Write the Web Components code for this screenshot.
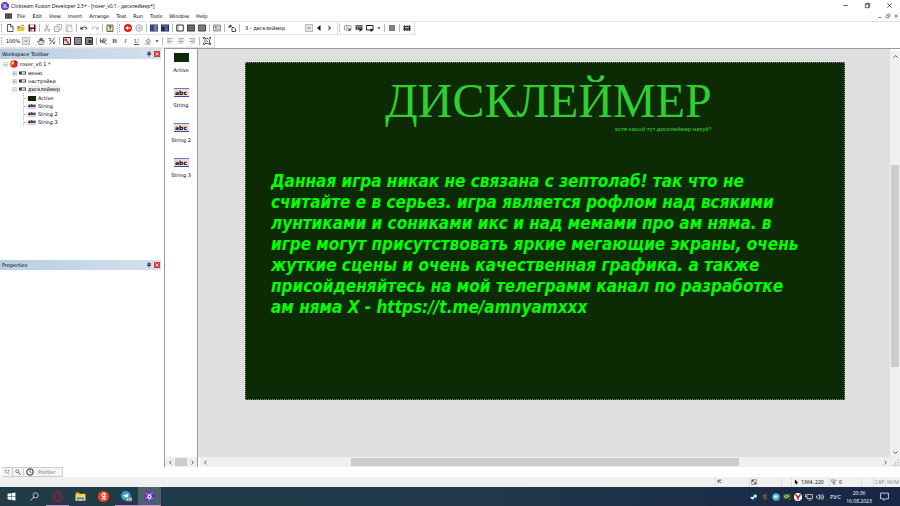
<!DOCTYPE html>
<html lang="ru">
<head>
<meta charset="utf-8">
<title>Clickteam Fusion Developer 2.5+</title>
<style>
  body {
    margin: 0;
    height: 100vh;
    font: 5px/8px "Open Sans", "Noto Sans", sans-serif;
    color: #000;
    background: #fff;
    --wide: "DejaVu Sans", "Noto Sans", sans-serif;
  }
</style>
</head>
<body>
<fusion-app></fusion-app>

<script>
// every icon is drawn on a 16x16 grid
const page = '<path d="M3 1h7l4 4v10H3z" fill="#fff" stroke="#333" stroke-width="1.6"/><path d="M9 1v5h5" fill="none" stroke="#333" stroke-width="1.4"/>';
const icons = {
  fusion: '<circle cx="8" cy="8" r="8" fill="#5b35a8"/><path d="M2 4q6 0 6 4 0-5 5-5M2 10q5 1 6-2 1 5 6 3M8 8q-2 4 0 7" fill="none" stroke="#b79af0" stroke-width="1.6"/><circle cx="8" cy="8" r="3" fill="#fff"/><circle cx="8" cy="8" r="1.3" fill="#37205f"/>',
  film: '<path d="M0 1h16v14H0z" fill="#333"/><path d="M5 2v12M11 2v12M0 8h16" stroke="#999" stroke-width="1"/><path d="M2 3v10M14 3v10" stroke="#777" stroke-width="1.4" stroke-dasharray="2 2"/>',
  new: page,
  open: '<path d="M1 4h5l1 2h6v8H1z" fill="#c58a12"/><path d="M1 14l3-7h12l-3 7z" fill="#f8c63d"/><path d="M9 3q3-3 5 1" fill="none" stroke="#c33" stroke-width="1.6"/>',
  save: '<path d="M1 1h14v14H1z" fill="#4a0d18"/><path d="M4 1h8v6H4z" fill="#f4e8e8"/><path d="M4 10h8v5H4z" fill="#ddd"/><path d="M5 11h2v3H5z" fill="#4a0d18"/>',
  cut: '<path d="M5 1l5 9M11 1l-5 9" stroke="#888" stroke-width="1.4"/><circle cx="4.5" cy="12.5" r="2" fill="none" stroke="#888" stroke-width="1.4"/><circle cx="11.5" cy="12.5" r="2" fill="none" stroke="#888" stroke-width="1.4"/>',
  copy: '<path d="M6 1h9v10H6z" fill="#fff" stroke="#aaa" stroke-width="1.6"/><path d="M1 5h9v10H1z" fill="#fff" stroke="#999" stroke-width="1.6"/><path d="M3 9h5M3 12h5" stroke="#bbb"/>',
  paste: '<path d="M2 2h11v13H2z" fill="#eee" stroke="#aaa" stroke-width="1.6"/><path d="M5 6h9v9H5z" fill="#fff" stroke="#bbb" stroke-width="1.4"/>',
  undo: '<path d="M4 8q6-5 10 0q0 2-3 3" fill="none" stroke="#222" stroke-width="1.8"/><path d="M1 5v6h6z" fill="#222"/>',
  redo: '<path d="M12 8q-6-5-10 0q0 2 3 3" fill="none" stroke="#aaa" stroke-width="1.6"/><path d="M15 5v6H9z" fill="#aaa"/>',
  help: '<path d="M2 2h12v13H2z" fill="#f5ec8c" stroke="#446" stroke-width="1.6"/><path d="M6 6q0-2 2-2t2 2q0 1.5-2 3v1M8 11.5v2" fill="none" stroke="#226" stroke-width="2"/>',
  back: '<circle cx="8" cy="8" r="8" fill="#e02020"/><path d="M3 8l5-4v3h5v2H8v3z" fill="#fff"/>',
  forward: '<circle cx="8" cy="8" r="6.5" fill="#eee" stroke="#999" stroke-width="1.6"/><path d="M12 8L8 4.5V7H4v2h4v2.5z" fill="#bbb"/>',
  story: '<path d="M0 1h16v14H0z" fill="#22285c"/><path d="M7 4h8M7 8h8M7 12h8" stroke="#b8c4f0" stroke-width="2"/><path d="M2 4h3M2 8h3M2 12h3" stroke="#6a86dd" stroke-width="2"/>',
  events: '<path d="M0 1h16v14H0z" fill="#22285c"/><path d="M2 4h12M7 8h7M7 12h7" stroke="#8fa4ea" stroke-width="1.6"/>',
  frame: '<path d="M1.5 2h13v12h-13z" fill="#fff" stroke="#333" stroke-width="2"/><path d="M4 2v12" stroke="#333"/>',
  list: '<path d="M0 1h16v14H0z" fill="#444"/><path d="M2 5h12M2 8h12M2 11h12" stroke="#999" stroke-width="1.4"/>',
  grid: '<path d="M1 2h14v12H1z" fill="#888" stroke="#444" stroke-width="2"/><path d="M6 2v12M11 2v12M1 6h14M1 10h14" stroke="#666"/>',
  props: '<path d="M1 2h14v12H1z" fill="#ddd" stroke="#777" stroke-width="1.6"/><path d="M4 5h3v3H4zM9 6h4M4 11h9" fill="#777" stroke="#777"/>',
  swap: '<path d="M2 8V4h4M4 2l3 2-3 2" fill="none" stroke="#111" stroke-width="1.8"/><path d="M8 7h4l3 3v5H8z" fill="#fff" stroke="#222" stroke-width="1.6"/>',
  prev: '<path d="M11 2v12L4 8z" fill="#111"/>',
  next: '<path d="M5 2v12l6-6z" fill="#777"/>',
  run: '<path d="M1 3h13v9H1z" fill="#eee" stroke="#888" stroke-width="1.4"/><path d="M4 6h5M4 9h3" stroke="#777"/><path d="M9 8l6 3.5-6 3.5z" fill="#555"/>',
  runframe: '<path d="M1 2h14v10H1z" fill="#555"/><path d="M1 5h14M5 2v10M10 2v10" stroke="#aaa"/><path d="M9 8l6 3.5-6 4z" fill="#222"/>',
  build: '<path d="M1 3h13v9H1z" fill="#fff" stroke="#222" stroke-width="2"/><path d="M9 9l6 3-6 4z" fill="#111"/>',
  stop: '<path d="M2 2h12v12H2z" fill="#777"/><path d="M2 6h12M2 10h12" stroke="#999"/>',
  debug: '<path d="M1 4h14v9H1z" fill="#333"/><path d="M3 2v12M8 2v12M13 2v12" stroke="#333" stroke-width="1.5"/><path d="M4 7h8M5 10h2M9 10h2" stroke="#ddd" stroke-width="1.5"/>',
  hand: '<path d="M4 15L1 9l2-1 2 2V4h2v4-6h2v6-5h2v6l1-3h2v6l-2 3z" fill="#ddd" stroke="#444" stroke-width="1.1"/>',
  zoom: '<path d="M3 15L14 1" stroke="#222" stroke-width="1.4"/><path d="M1 3h5l-3 4h4M9 9l5 5M14 8l-4 6" fill="none" stroke="#333" stroke-width="1.3"/>',
  gridred: '<path d="M1 1h14v14H1z" fill="#ddd" stroke="#333" stroke-width="2"/><path d="M3 3l6 1-2 2 6 6-2 2-6-7-2 2z" fill="#d22"/>',
  snap: '<path d="M1 1h14v14H1z" fill="#999" stroke="#333" stroke-width="2"/><path d="M4 1v14M8 1v14M12 1v14M1 5h14M1 9h14M1 12h14" stroke="#777"/>',
  center: '<path d="M1 1h14v14H1z" fill="#888" stroke="#333" stroke-width="2"/><path d="M7 6h6v6H7z" fill="#333"/>',
  fontsel: '<path d="M1 3v9l3-6 2 6V3M8 2v11M12 6l-3 4 4 5M12 3v4" fill="none" stroke="#555" stroke-width="1.6"/>',
  fill: '<path d="M4 8l5-5 4 6-5 3zM2 14h11" fill="#ddd" stroke="#777" stroke-width="1.6"/>',
  down: '<path d="M4 6h8l-4 5z" fill="#333"/>',
  alignl: '<path d="M2 3h12M2 6h8M2 9h12M2 12h8" stroke="#999" stroke-width="1.5"/>',
  alignc: '<path d="M2 3h12M4 6h8M2 9h12M4 12h8" stroke="#999" stroke-width="1.5"/>',
  alignr: '<path d="M2 3h12M6 6h8M2 9h12M6 12h8" stroke="#999" stroke-width="1.5"/>',
  fit: '<path d="M4 3h6l3 3v7H4z" fill="#fff" stroke="#222" stroke-width="1.4"/><path d="M1 4V1h3M12 1h3v3M15 12v3h-3M4 15H1v-3M7 7l3 3" fill="none" stroke="#222" stroke-width="1.6"/>',
  pin: '<path d="M5 3h6v6H5zM3 9h10M8 9v6" fill="none" stroke="#222" stroke-width="2"/><path d="M9 3h2v6H9z" fill="#222"/>',
  closered: '<path d="M0 0h16v16H0z" fill="#cf3b3b"/><path d="M4 4l8 8M12 4l-8 8" stroke="#fff" stroke-width="2"/>',
  plus: '<path d="M2 2h12v12H2z" fill="#fff" stroke="#999" stroke-width="1.5"/><path d="M8 4.5v7M4.5 8h7" stroke="#446" stroke-width="1.5"/>',
  minus: '<path d="M2 2h12v12H2z" fill="#fff" stroke="#999" stroke-width="1.5"/><path d="M4.5 8h7" stroke="#446" stroke-width="1.5"/>',
  app: '<circle cx="8" cy="8" r="7.5" fill="#e0301c"/><path d="M9 1l2 5 5 0a8 8 0 0 0-7-5z" fill="#8a1810"/><path d="M2 5l6-3-1 7-4 1z" fill="#ffb52e"/><circle cx="6" cy="5" r="2" fill="#ffe9a0"/>',
  level: '<path d="M0 4h16v8H0z" fill="#333"/><path d="M6 6h8v4H6z" fill="#fff"/>',
  green: '<path d="M0 0h16v16H0z" fill="#0c2a03"/>',
  minimize: '<path d="M3 8h10" stroke="#111" stroke-width="1.5"/>',
  restore: '<path d="M3 5h8v8H3z" fill="none" stroke="#111" stroke-width="1.5"/><path d="M5 5V3h8v8h-2" fill="none" stroke="#111" stroke-width="1.5"/>',
  close: '<path d="M3 3l10 10M13 3L3 13" stroke="#111" stroke-width="1.5"/>',
  mdimin: '<path d="M4 12h8" stroke="#567a9e" stroke-width="2.5"/>',
  mdirestore: '<path d="M3 7h7v6H3zM6 6V3h7v7h-2" fill="none" stroke="#567a9e" stroke-width="2"/>',
  mdiclose: '<path d="M4 4l8 8M12 4l-8 8" stroke="#567a9e" stroke-width="2.6"/>',
  left: '<path d="M11 2L5 8l6 6" fill="none" stroke="#333" stroke-width="2.5"/>',
  right: '<path d="M5 2l6 6-6 6" fill="none" stroke="#333" stroke-width="2.5"/>',
  up: '<path d="M2 11l6-6 6 6" fill="none" stroke="#333" stroke-width="2.5"/>',
  dn: '<path d="M2 5l6 6 6-6" fill="none" stroke="#333" stroke-width="2.5"/>',
  grip: '<path d="M13 4v2M13 8v2M13 12v2M9 8v2M9 12v2M5 12v2" stroke="#aaa" stroke-width="2"/>',
  tools: '<path d="M1 3h6M4 3v8M8 13l6-9M9 4h5M9 9l4 4" fill="none" stroke="#777" stroke-width="1.5"/>',
  lens: '<circle cx="6" cy="6" r="4" fill="none" stroke="#444" stroke-width="1.6"/><path d="M9 9l6 6" stroke="#444" stroke-width="2.5"/>',
  clock: '<circle cx="8" cy="8" r="6.5" fill="#fff" stroke="#222" stroke-width="2"/><path d="M8 4v4l3 2" fill="none" stroke="#222" stroke-width="1.5"/>',
  corner: '<path d="M3 11V3h9M4 4l7 7" fill="none" stroke="#222" stroke-width="1.8"/>',
  size: '<path d="M2 2h12v12H2z" fill="#fff" stroke="#333" stroke-width="1.5"/><path d="M4 4l8 8M4 8V4h4M8 12h4V8" fill="none" stroke="#222" stroke-width="1.5"/>',
  pointer: '<path d="M5 1v12l3-3 2 5 2-1-2-4h4z" fill="#000"/>',
  count: '<path d="M1 2h6v5H1zM9 3h6M5 11l8-8M6 9h5v5H6z" fill="none" stroke="#555" stroke-width="1.3"/>',
  windows: '<path d="M1 3l6-1v5.5H1zM8 2l7-1v6.5H8zM1 8.5h6V14l-6-1zM8 8.5h7V15l-7-1z" fill="#fff"/>',
  search: '<circle cx="10" cy="6" r="4.5" fill="none" stroke="#e8eef0" stroke-width="1.3"/><path d="M7 9l-6 6" stroke="#e8eef0" stroke-width="1.5"/>',
  opera: '<ellipse cx="8" cy="8" rx="7.2" ry="7.2" fill="none" stroke="#b3164b" stroke-width="1.3"/><ellipse cx="8" cy="8" rx="3.3" ry="6" fill="none" stroke="#b3164b" stroke-width="1.3"/>',
  folder: '<path d="M1 2h5l1 2h8v10H1z" fill="#e9a820"/><path d="M1 5h14v9H1z" fill="#ffd65c"/><path d="M3 9h10v5h-2v-2H5v2H3z" fill="#3b92d8"/>',
  yandex: '<circle cx="8" cy="8" r="8" fill="#fc3f1d"/><path d="M10 13V3.5H8.5q-2.5 0-2.5 2.5 0 2 2 2.5h2M8.5 8.5L6 13" fill="none" stroke="#fff" stroke-width="1.7"/>',
  telegram: '<circle cx="7" cy="7" r="7" fill="#2ba1da"/><path d="M2.5 7l8.5-3.5-1.5 7.5-3-2-1 1.5V8z" fill="#fff"/><path d="M7 9h9v6H7z" fill="#8a9499"/><path d="M9 12h1M11.5 12h1M14 12h1" stroke="#fff" stroke-width="2"/>',
  steam: '<circle cx="8" cy="8" r="7.5" fill="#14406e"/><circle cx="10.5" cy="6" r="3" fill="#fff"/><path d="M0 9l9-2-2 5-2 1z" fill="#fff"/>',
  epic: '<path d="M2 1h12v12l-6 3-6-3z" fill="#2c2c2c"/><path d="M5 4h2M5 4v5M5 6.5h2M9 4h3M9 4v5h3M5 12h6" fill="none" stroke="#aaa" stroke-width="1"/>',
  messenger: '<circle cx="8" cy="8" r="7.5" fill="#4db6e8"/><path d="M4 5h7v5H4z" fill="#d8f0fb"/><circle cx="12" cy="12" r="3" fill="#7a8a94"/>',
  nvidia: '<path d="M1 2h14v10H1z" fill="#4a7a12"/><path d="M3 7q4-5 9 0-5 5-9 0z" fill="none" stroke="#e6f0d6" stroke-width="1.3"/><path d="M9 9h7v7H9z" fill="#2a2a2a"/><path d="M11 12l2 2 3-4" stroke="#e90" fill="none"/>',
  ybrowser: '<circle cx="8" cy="8" r="8" fill="#fff"/><path d="M3 3l5 6 5-6M8 8v6" fill="none" stroke="#e01818" stroke-width="3"/>',
  network: '<path d="M4 3h11v8H4zM7 14h6M1 2v6h3" fill="none" stroke="#fff" stroke-width="1.3"/>',
  sound: '<path d="M1 6h2l4-3v10l-4-3H1zM9 5q2 3 0 6M11 3.5q3 4.5 0 9M13 2q5 6 0 12" fill="none" stroke="#fff" stroke-width="1.2"/>',
  notice: '<path d="M1 2h14v10H10l-3 3v-3H1z" fill="none" stroke="#fff" stroke-width="1.3"/>'
};

function define(name, html) {
  const template = document.createElement("template");
  template.innerHTML = html;
  customElements.define(name, class extends HTMLElement {
    constructor() {
      super();
      this.attachShadow({ mode: "open" });
      this.shadowRoot.appendChild(template.content.cloneNode(true));
    }
  });
}

class SvgIcon extends HTMLElement {
  constructor() {
    super();
    this.attachShadow({ mode: "open" });
  }
  connectedCallback() {
    this.shadowRoot.innerHTML = `<style>
      :host{display:block;flex:none;width:8px;height:8px}
      svg{display:block;width:100%;height:100%}
    </style><svg viewBox="0 0 16 16" preserveAspectRatio="none" aria-hidden="true">${icons[this.getAttribute("name")]}</svg>`;
  }
}
customElements.define("svg-icon", SvgIcon);

class IconButton extends HTMLElement {
  constructor() {
    super();
    this.attachShadow({ mode: "open" });
  }
  connectedCallback() {
    const name = this.getAttribute("icon");
    this.shadowRoot.innerHTML = `<style>
      :host{display:block;flex:none;width:11px}
      button{display:flex;align-items:center;justify-content:center;width:100%;height:100%;
        padding:0;border:0;background:none;font:inherit;color:inherit}
      svg-icon{width:var(--icon,8px);height:var(--icon,8px)}
    </style><button aria-label="${this.getAttribute("label") || name}">${name ? `<svg-icon name="${name}"></svg-icon>` : "<slot></slot>"}</button>`;
  }
}
customElements.define("icon-button", IconButton);

// the small "abc" picture of a String object
define("abc-icon", `<style>
  :host{display:flex;align-items:center;justify-content:center;box-sizing:border-box;flex:none;
    background:#f1d9d0;border:solid #3b3fd0;border-width:1px 0;color:#000;font-weight:bold;line-height:1}
</style>abc`);

define("tool-group", `<style>
  :host{display:flex;align-items:stretch;height:13px;box-sizing:border-box;
    padding-left:4px;padding-right:2px;background:#fdfdfd;
    border-right:1px solid #ddd;border-bottom:1px solid #e4e4e4;position:relative}
  :host::before{content:"";position:absolute;left:1px;top:2px;bottom:2px;border-left:1px dotted #aaa}
  ::slotted(hr){width:1px;margin:2px 1px 2px 2px;border:0;background:#bbb}
</style><slot></slot>`);

class DropDown extends HTMLElement {
  constructor() {
    super();
    this.attachShadow({ mode: "open" });
  }
  connectedCallback() {
    this.shadowRoot.innerHTML = `<style>
      :host{display:flex;align-items:center;background:#fff}
      label{display:flex;flex:1;align-items:center;min-width:0}
      select{appearance:none;flex:1;min-width:0;border:0;padding:0 0 0 2px;margin:0;background:none;font:inherit;color:inherit}
      svg-icon{width:4px;height:4px;padding:1px;background:#e4e4e4;border:1px solid #bbb}
    </style><label><select aria-label="${this.getAttribute("label")}"><option>${this.getAttribute("value")}</option></select><svg-icon name="dn"></svg-icon></label>`;
  }
}
customElements.define("drop-down", DropDown);

define("title-bar", `<style>
  :host{display:flex;align-items:center;height:11px;padding-left:1px;background:#fff}
  span{flex:1;padding-left:2px}
  svg-icon{width:8px;height:8px}
  icon-button{width:22px;--icon:7px}
</style>
<svg-icon name="fusion"></svg-icon><span><slot></slot></span>
<icon-button icon="minimize"></icon-button><icon-button icon="restore"></icon-button><icon-button icon="close"></icon-button>`);

define("menu-bar", `<style>
  :host{display:flex;align-items:center;height:11px;padding-left:5px;background:#fff;border-bottom:1px solid #e2e2e2;box-sizing:border-box}
  svg-icon{width:7px;height:6px;margin-right:2px}
  nav{display:flex;flex:1}
  button{border:0;background:none;padding:0 4px 0 3px;font:inherit;font-family:var(--wide);color:inherit}
  icon-button{width:8px;height:8px;--icon:6px}
</style>
<svg-icon name="film"></svg-icon>
<nav><button>File</button><button>Edit</button><button>View</button><button>Insert</button><button>Arrange</button><button>Text</button><button>Run</button><button>Tools</button><button>Window</button><button>Help</button></nav>
<icon-button icon="mdimin"></icon-button><icon-button icon="mdirestore"></icon-button><icon-button icon="mdiclose"></icon-button>`);

define("tool-bars", `<style>
  :host{display:block;background:#fff;font-family:var(--wide)}
  div{display:flex}
  .frame{width:70px;margin-left:2px}
  .zoom{width:26px;margin-right:5px}
  .narrow{width:7px;--icon:6px}
  b,i,u{font-family:"Liberation Serif",serif;font-size:7px;color:#555}
</style>
<div>
  <tool-group>
    <icon-button icon="new"></icon-button><icon-button icon="open"></icon-button><icon-button icon="save"></icon-button><hr>
    <icon-button icon="cut"></icon-button><icon-button icon="copy"></icon-button><icon-button icon="paste"></icon-button><hr>
    <icon-button icon="undo"></icon-button><icon-button icon="redo"></icon-button><hr>
    <icon-button icon="help"></icon-button>
  </tool-group>
  <tool-group>
    <icon-button icon="back"></icon-button><icon-button icon="forward"></icon-button><hr>
    <icon-button icon="story"></icon-button><icon-button icon="events"></icon-button><hr>
    <icon-button icon="frame"></icon-button><icon-button icon="list"></icon-button><icon-button icon="grid"></icon-button><hr>
    <icon-button icon="props"></icon-button><hr>
    <icon-button icon="swap"></icon-button><hr>
    <drop-down class="frame" label="Frame" value="3 - дисклеймер"></drop-down>
    <icon-button icon="prev"></icon-button><icon-button icon="next"></icon-button>
  </tool-group>
  <tool-group>
    <icon-button icon="run"></icon-button><icon-button icon="runframe"></icon-button><icon-button icon="build"></icon-button><icon-button class="narrow" icon="down"></icon-button><hr>
    <icon-button icon="stop"></icon-button><hr>
    <icon-button icon="debug"></icon-button>
  </tool-group>
</div>
<div>
  <tool-group>
    <drop-down class="zoom" label="Zoom" value="100%"></drop-down>
    <icon-button icon="hand"></icon-button><icon-button icon="zoom"></icon-button><hr>
    <icon-button icon="gridred"></icon-button><icon-button icon="snap"></icon-button><icon-button icon="center"></icon-button><hr>
    <icon-button icon="fontsel"></icon-button><icon-button label="Bold"><b>B</b></icon-button><icon-button label="Italic"><i>I</i></icon-button><icon-button label="Underline"><u>U</u></icon-button><icon-button icon="fill"></icon-button><icon-button class="narrow" icon="down"></icon-button><hr>
    <icon-button icon="alignl"></icon-button><icon-button icon="alignc"></icon-button><icon-button icon="alignr"></icon-button><hr>
    <icon-button icon="fit"></icon-button>
  </tool-group>
</div>`);

define("dock-panel", `<style>
  :host{display:flex;flex-direction:column;min-height:0;font-family:var(--wide)}
  header{display:flex;align-items:center;height:10px;padding-left:2px;background:linear-gradient(90deg,#b9cde2,#d3e1ef)}
  span{flex:1}
  icon-button{width:8px;--icon:6px}
</style>
<header><span><slot name="title"></slot></span><icon-button icon="pin"></icon-button><icon-button icon="closered"></icon-button></header>
<slot></slot>`);

define("workspace-tree", `<style>
  :host{display:block;padding:1px 3px}
  ul{list-style:none;margin:0;padding:1px 0 0 9px}
  .root{padding:0}
  div{display:flex;align-items:center;height:8px;gap:2px}
  .exp{width:5px;height:5px}
  .lvl{width:7px;height:6px}
  .leaves{margin-left:11px;padding-left:0;border-left:1px dotted #bbb}
  .leaves svg-icon{width:8px;height:5px}
  .leaves div::before{content:"";width:4px;border-top:1px dotted #bbb;margin-right:-2px}
  abc-icon{width:8px;height:5px;font-size:4px;border-width:0;background:#dcc8e4}
  mark{background:#efefef;color:inherit}
</style>
<ul class="root">
  <li><div><svg-icon class="exp" name="minus"></svg-icon><svg-icon name="app"></svg-icon>rover_v0.1 *</div>
    <ul>
      <li><div><svg-icon class="exp" name="plus"></svg-icon><svg-icon class="lvl" name="level"></svg-icon>меню</div></li>
      <li><div><svg-icon class="exp" name="plus"></svg-icon><svg-icon class="lvl" name="level"></svg-icon>настройки</div></li>
      <li><div><svg-icon class="exp" name="minus"></svg-icon><svg-icon class="lvl" name="level"></svg-icon><mark>дисклеймер</mark></div>
        <ul class="leaves">
          <li><div><svg-icon name="green"></svg-icon>Active</div></li>
          <li><div><abc-icon></abc-icon>String</div></li>
          <li><div><abc-icon></abc-icon>String 2</div></li>
          <li><div><abc-icon></abc-icon>String 3</div></li>
        </ul>
      </li>
    </ul>
  </li>
</ul>`);

define("dock-tabs", `<style>
  :host{display:flex;height:10px;padding-left:2px}
  button{display:flex;align-items:center;gap:4px;padding:0 2px;border:1px solid #ccc;border-left-width:0;background:#f4f4f4;font:inherit;color:#777}
  svg-icon{width:6px;height:6px}
  .wide{padding-right:6px;font-family:var(--wide)}
  .wide svg-icon{width:8px;height:8px}
</style>
<button aria-label="Properties"><svg-icon name="tools"></svg-icon></button>
<button aria-label="Find"><svg-icon name="lens"></svg-icon></button>
<button class="wide"><svg-icon name="clock"></svg-icon>Profiler</button>`);

// before, size and after share out the track
class ScrollBar extends HTMLElement {
  constructor() {
    super();
    this.attachShadow({ mode: "open" });
  }
  connectedCallback() {
    const vertical = this.hasAttribute("vertical");
    const before = this.getAttribute("before"), size = this.getAttribute("size"), after = this.getAttribute("after");
    this.shadowRoot.innerHTML = `<style>
      :host{display:flex;flex-direction:${vertical ? "column" : "row"};background:#f0f0f0;min-width:0}
      icon-button{flex:none;width:10px;height:10px;--icon:5px}
      .before{flex:${before} 0 0}
      .thumb{flex:${size} 0 0;background:#cdcdcd;margin:${vertical ? "0 1px" : "1px 0"}}
      .after{flex:${after} 0 0}
    </style>
    <icon-button icon="${vertical ? "up" : "left"}"></icon-button>
    <div class="before"></div><div class="thumb"></div><div class="after"></div>
    <icon-button icon="${vertical ? "dn" : "right"}"></icon-button>`;
  }
}
customElements.define("scroll-bar", ScrollBar);

define("object-list", `<style>
  :host{display:flex;flex-direction:column;border:solid #999;border-width:1px 0 0 1px;font-family:var(--wide)}
  ul{flex:1;list-style:none;margin:0;padding:4px 0 0}
  li{display:flex;flex-direction:column;align-items:center;gap:4px;height:35px}
  svg-icon,abc-icon{width:15px;height:9px}
  abc-icon{font-size:6px;border-top-color:#6a74e8}
  scroll-bar{height:10px}
</style>
<ul>
  <li><svg-icon name="green"></svg-icon>Active</li>
  <li><abc-icon></abc-icon>String</li>
  <li><abc-icon></abc-icon>String 2</li>
  <li><abc-icon></abc-icon>String 3</li>
</ul>
<scroll-bar before="0" size="12" after="0"></scroll-bar>`);

define("game-frame", `<style>
  :host{display:block;box-sizing:border-box;background:#0c2a03;outline:1px dotted #888;outline-offset:-1px;white-space:nowrap;padding:17px 26px}
  header{display:flex;flex-direction:column;align-items:flex-end;gap:2px;width:max-content;margin-left:114px;color:#32cd32}
  h1{margin:0;font:48px/44px "Liberation Serif",serif}
  small{font:6px/8px Roboto,sans-serif}
  p{margin:38px 0 0;font:italic bold 17px/21px "DejaVu Sans Condensed","DejaVu Sans",sans-serif;color:#00ff00}
</style>
<header><h1><slot name="title"></slot></h1><small><slot name="note"></slot></small></header>
<p><slot></slot></p>`);

define("frame-editor", `<style>
  :host{display:grid;grid-template:1fr 10px / 1fr 10px;background:#dfdfdf;border:solid #999;border-width:1px 0 0 1px;min-width:0}
  main{display:flex;padding:13px 45px 57px 47px;min-width:0}
  ::slotted(game-frame){flex:1;min-width:0}
  .h{border-left:2px solid #fff}
  .v{border-top:2px solid #fff}
  svg-icon{width:10px;height:10px;background:#f0f0f0}
</style>
<main><slot></slot></main>
<scroll-bar class="v" vertical before="104" size="202" after="80"></scroll-bar>
<scroll-bar class="h" before="141" size="390" after="141"></scroll-bar>
<svg-icon name="grip"></svg-icon>`);

define("status-bar", `<style>
  :host{display:flex;justify-content:flex-end;height:10px;background:#f0f0f0}
  span{display:flex;align-items:center;box-sizing:border-box;gap:2px;padding-left:1px;border-left:1px solid #ddd}
  svg-icon{width:6px;height:6px}
  .off{color:#888}
</style>
<span style="width:34px"><svg-icon name="corner"></svg-icon></span>
<span style="width:32px"><svg-icon name="size"></svg-icon></span>
<span style="width:10px"></span>
<span style="width:38px"><svg-icon name="pointer"></svg-icon>1364, 220</span>
<span style="width:32px"><svg-icon name="count"></svg-icon>0</span>
<span style="width:12px"></span>
<span class="off" style="width:12px">CAP</span>
<span class="off" style="width:15px">NUM</span>`);

define("task-bar", `<style>
  :host{display:flex;height:19px;background:linear-gradient(90deg,#213c46,#20384a 55%,#182644);color:#fff}
  nav{display:flex;flex:1}
  icon-button{width:23px;--icon:11px}
  .thin{--icon:9px}
  .open{box-shadow:inset 0 -1px #d58be0}
  .active{background:#4b616b}
  .tray{display:flex;align-items:center;padding-right:4px}
  .tray icon-button{width:11px;height:100%;--icon:8px}
  .lang{padding:0 5px 0 4px;font-size:6px}
  time{text-align:center;width:26px}
  .tray .notice{width:24px;--icon:9px}
</style>
<nav>
  <icon-button class="thin" icon="windows"></icon-button><icon-button class="thin" icon="search"></icon-button>
  <icon-button class="open" icon="opera"></icon-button><icon-button icon="folder"></icon-button>
  <icon-button icon="yandex"></icon-button><icon-button class="open" icon="telegram"></icon-button>
  <icon-button class="open active" icon="fusion"></icon-button>
</nav>
<div class="tray">
  <icon-button icon="steam"></icon-button><icon-button icon="epic"></icon-button><icon-button icon="messenger"></icon-button>
  <icon-button icon="nvidia"></icon-button><icon-button icon="ybrowser"></icon-button><icon-button icon="network"></icon-button>
  <icon-button icon="sound"></icon-button>
  <span class="lang">РУС</span><time>20:36<br>16.08.2023</time>
  <icon-button class="notice" icon="notice"></icon-button>
</div>`);

define("fusion-app", `<style>
  :host{display:flex;flex-direction:column;height:100vh;overflow:hidden}
  .work{flex:1;display:grid;grid-template-columns:164px 33px 1fr;min-height:0}
  .docks{display:flex;flex-direction:column;padding-right:3px;border-top:1px solid #ddd}
  .workspace{flex:211 0 0}
  .properties{flex:207 0 0}
</style>
<title-bar>Clickteam Fusion Developer 2.5+ - [rover_v0.1 - дисклеймер*]</title-bar>
<menu-bar></menu-bar>
<tool-bars></tool-bars>
<div class="work">
  <div class="docks">
    <dock-panel class="workspace"><span slot="title">Workspace Toolbar</span><workspace-tree></workspace-tree></dock-panel>
    <dock-panel class="properties"><span slot="title">Properties</span></dock-panel>
  </div>
  <object-list></object-list>
  <frame-editor>
    <game-frame>
      <span slot="title">ДИСКЛЕЙМЕР</span>
      <span slot="note">хотя какой тут дисклеймер нахуй?</span>
      Данная игра никак не связана с зептолаб! так что не<br>
      считайте е в серьез. игра является рофлом над всякими<br>
      лунтиками и сониками икс и над мемами про ам няма. в<br>
      игре могут присутствовать яркие мегающие экраны, очень<br>
      жуткие сцены и очень качественная графика. а также<br>
      присойденяйтесь на мой телеграмм канал по разработке<br>
      ам няма X - https://t.me/amnyamxxx
    </game-frame>
  </frame-editor>
</div>
<dock-tabs></dock-tabs>
<status-bar></status-bar>
<task-bar></task-bar>`);
</script>
</body>
</html>
